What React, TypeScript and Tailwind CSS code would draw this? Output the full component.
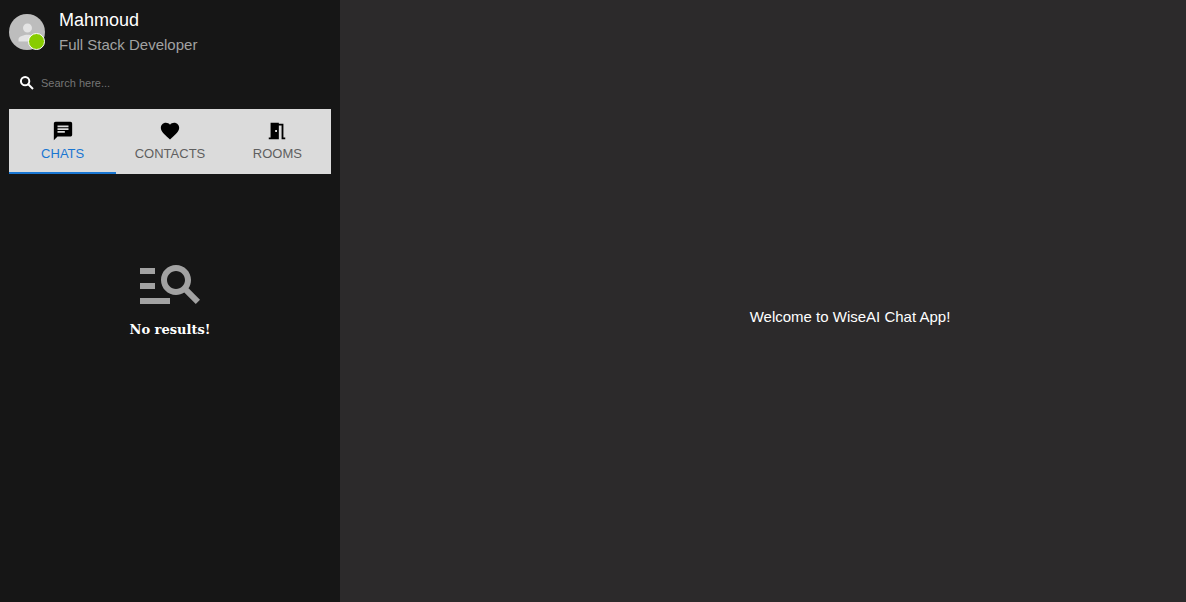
import { useState } from "react";
import { MdChat, MdFavorite, MdManageSearch, MdMeetingRoom, MdPerson } from "react-icons/md";

const tabs = [
  { label: "CHATS", Icon: MdChat },
  { label: "CONTACTS", Icon: MdFavorite },
  { label: "ROOMS", Icon: MdMeetingRoom },
];

function SearchIcon() {
  return (
    <svg viewBox="0 0 24 24" className="size-[18px] shrink-0" fill="none" stroke="currentColor" strokeWidth="2.6" aria-hidden="true">
      <circle cx="9.5" cy="9.5" r="5.6" />
      <path d="M13.7 13.7 20 20" />
    </svg>
  );
}

function Profile() {
  return (
    <header className="flex items-center gap-[14px]">
      <div className="relative flex size-9 shrink-0 items-center justify-center rounded-full bg-[#bdbdbd] text-[#e4e4e4]">
        <MdPerson className="size-[27px]" aria-hidden="true" />
        <span className="absolute right-0 bottom-0 size-[17px] rounded-full border border-white bg-[#8c0]" />
      </div>
      <div>
        <h1 className="text-[18px] leading-[26px] text-white">Mahmoud</h1>
        <p className="text-[15px] leading-6 text-[#a2a2a2]">Full Stack Developer</p>
      </div>
    </header>
  );
}

export default function App() {
  const [active, setActive] = useState("CHATS");
  return (
    <div className="flex min-h-screen bg-[#2c2a2b] font-['Liberation_Sans',Arial,sans-serif]">
      <aside className="flex w-[340px] shrink-0 flex-col bg-[#161616] px-[9px] pt-[7px]">
        <Profile />
        <label className="mt-4 flex h-5 items-center gap-[5px] pl-[9px] text-white">
          <SearchIcon />
          <input
            type="search"
            aria-label="Search"
            placeholder="Search here..."
            className="min-w-0 flex-1 bg-transparent text-[11px] leading-4 outline-none placeholder:text-[#757575]"
          />
        </label>
        <div role="tablist" className="mt-4 grid h-[65px] grid-cols-3 bg-[#dbdbdb]">
          {tabs.map(({ label, Icon }) => (
            <button
              key={label}
              type="button"
              role="tab"
              aria-selected={active === label}
              onClick={() => setActive(label)}
              className={
                active === label
                  ? "flex flex-col items-center justify-center gap-1 border-b-2 border-[#1976d2] text-[13px] leading-4 text-[#1976d2]"
                  : "flex flex-col items-center justify-center gap-1 border-b-2 border-transparent text-[13px] leading-4 text-[#5f5f5f]"
              }
            >
              <Icon className="size-[22px] text-black" aria-hidden="true" />
              {label}
            </button>
          ))}
        </div>
        <section className="mt-[73px] flex flex-col items-center">
          <MdManageSearch className="size-[72px] text-[#a2a2a2]" aria-hidden="true" />
          <p className="font-['DejaVu_Serif',serif] text-[13px] leading-[22px] font-bold text-white">No results!</p>
        </section>
      </aside>
      <main className="flex flex-1 items-center justify-center pt-8 pl-[174px]">
        <p className="text-[15px] leading-6 text-white">Welcome to WiseAI Chat App!</p>
      </main>
    </div>
  );
}
